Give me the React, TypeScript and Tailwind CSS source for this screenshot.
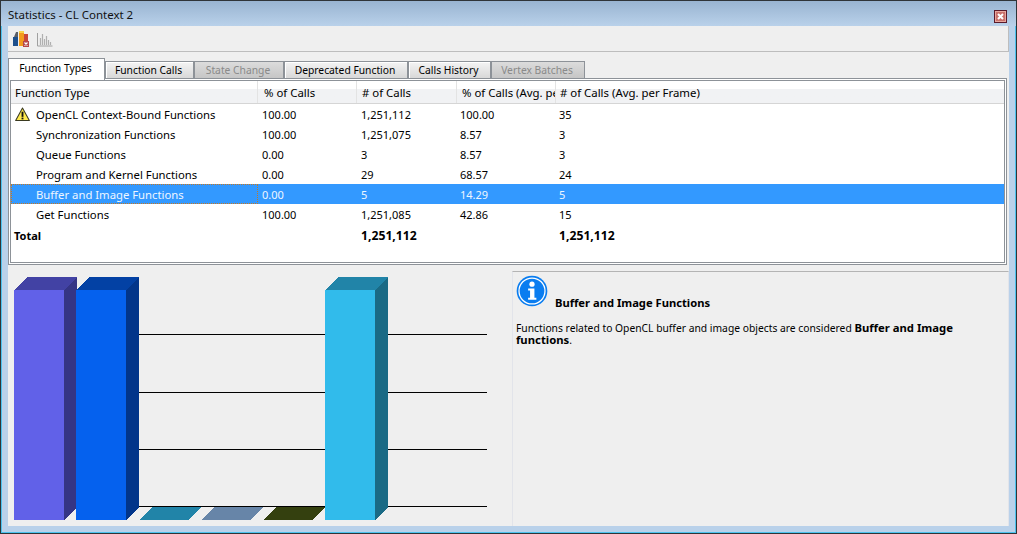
const font = "[font-family:'Noto_Sans',sans-serif]";

const tabs = [
  { t: "Function Types", w: "w-[97px]", k: "a" },
  { t: "Function Calls", w: "w-[89px]", k: "n" },
  { t: "State Change", w: "w-[90px]", k: "d" },
  { t: "Deprecated Function", w: "w-[124px]", k: "n" },
  { t: "Calls History", w: "w-[83px]", k: "n" },
  { t: "Vertex Batches", w: "w-[94px]", k: "d" },
];

const rows = [
  ["OpenCL Context-Bound Functions", "100.00", "1,251,112", "100.00", "35"],
  ["Synchronization Functions", "100.00", "1,251,075", "8.57", "3"],
  ["Queue Functions", "0.00", "3", "8.57", "3"],
  ["Program and Kernel Functions", "0.00", "29", "68.57", "24"],
  ["Buffer and Image Functions", "0.00", "5", "14.29", "5"],
  ["Get Functions", "100.00", "1,251,085", "42.86", "15"],
];

const headers = [
  { t: "Function Type", c: "pl-[4px]" },
  { t: "% of Calls", c: "pl-[6px]" },
  { t: "# of Calls", c: "pl-[5px]" },
  { t: "% of Calls (Avg. per Frame)", c: "pl-[5px]" },
  { t: "# of Calls (Avg. per Frame)", c: "pl-[4px]" },
];

function Warn() {
  return (
    <svg width="15" height="15" viewBox="0 0 16 16" className="absolute left-[4px] top-[3px]">
      <path d="M8 1 L15.3 14.5 H0.7 Z" fill="#ffe94d" stroke="#3a3a20" strokeWidth="1.1" strokeLinejoin="round" />
      <rect x="7" y="5" width="2" height="5.5" fill="#111" />
      <rect x="7" y="11.3" width="2" height="1.9" fill="#111" />
    </svg>
  );
}

function Info() {
  return (
    <svg width="32" height="32" viewBox="0 0 33 33" className="shrink-0">
      <circle cx="16.5" cy="16.5" r="15.8" fill="#0a7df0" />
      <circle cx="16.5" cy="16.5" r="13.4" fill="none" stroke="#fff" strokeWidth="1.3" />
      <circle cx="16.5" cy="9.5" r="2.7" fill="#fff" />
      <path d="M12.5 14 H19 V23.5 H21 V25.5 H12.5 V23.5 H14.5 V16 H12.5 Z" fill="#fff" />
    </svg>
  );
}

function Chart() {
  const tall = [
    { x: 14, f: "#6161e8", t: "#4242a4", s: "#353585" },
    { x: 76, f: "#0561ee", t: "#0341a4", s: "#02358a" },
    { x: 325, f: "#31bbeb", t: "#2184a8", s: "#1a6a85" },
  ];
  const flat = [
    { x: 139, c: "#2184a8" },
    { x: 201, c: "#6785a8" },
    { x: 263, c: "#34400f" },
  ];
  return (
    <svg width="504" height="261" viewBox="8 265 504 261" className="block" shapeRendering="crispEdges">
      {[334, 392, 449, 506].map((y) => (
        <rect key={y} x="139" y={y} width="348" height="1" fill="#000" />
      ))}
      {flat.map((b) => (
        <polygon key={b.x} points={`${b.x},520 ${b.x + 13},507 ${b.x + 62},507 ${b.x + 50},520`} fill={b.c} />
      ))}
      {tall.map((b) => (
        <g key={b.x}>
          <polygon points={`${b.x},290 ${b.x + 13},277 ${b.x + 63},277 ${b.x + 50},290`} fill={b.t} />
          <polygon points={`${b.x + 50},290 ${b.x + 63},277 ${b.x + 63},507 ${b.x + 50},520`} fill={b.s} />
          <rect x={b.x} y="290" width="50" height="230" fill={b.f} />
        </g>
      ))}
    </svg>
  );
}

function ToolIcons() {
  return (
    <div className="flex items-center gap-[8px] pl-[5px]">
      <svg width="16" height="16" viewBox="0 0 16 16">
        <path d="M1 6 L3 1 H5 V7 H1 Z" fill="#5a5f66" />
        <rect x="0" y="6" width="5" height="9" fill="#1d4f8c" />
        <rect x="6" y="2" width="5" height="13" fill="#f39a1c" />
        <rect x="6" y="0" width="5" height="2" fill="#f8d34a" />
        <rect x="11" y="3" width="4" height="8" fill="#c9453a" />
        <rect x="10" y="10" width="6" height="6" fill="#b5474a" />
        <path d="M11.5 11.5 L14.5 14.5 M14.5 11.5 L11.5 14.5" stroke="#fff" strokeWidth="1.2" />
      </svg>
      <svg width="16" height="16" viewBox="0 0 16 16">
        <path d="M0.5 2 V15 H15.5" stroke="#a0a0a0" fill="none" />
        <path d="M3.5 14 V7 M5.5 14 V3 M7.5 14 V8 M9.5 14 V5 M11.5 14 V9 M13.5 14 V11" stroke="#b0b0b0" strokeWidth="1.2" fill="none" />
      </svg>
    </div>
  );
}

export default function App() {
  return (
    <div className={`${font} w-[1017px] h-[534px] flex flex-col overflow-hidden border border-[#2f3438] bg-[#b9d1ea] text-[11px] text-black`}>
      <div className="h-[25px] shrink-0 flex items-center justify-between pl-[7px] pr-[9px] bg-gradient-to-b from-[#99b4d1] to-[#b9d1ea]">
        <span className="text-[11.5px] text-[#111] pt-[3px]">Statistics - CL Context 2</span>
        <div className="w-[13px] h-[13px] mt-[5px] bg-[#c9706a] border border-[#5a1a2a] shadow-[inset_0_0_0_1px_#e8a8a0] flex items-center justify-center">
          <svg width="9" height="9" viewBox="0 0 9 9">
            <path d="M2 2 L7 7 M7 2 L2 7" stroke="#fff" strokeWidth="2" />
          </svg>
        </div>
      </div>
      <div className="flex-1 min-h-0 flex flex-col border-x border-b border-[#4cc2ee]">
        <div className="ml-[6px] w-[1001px] flex-1 min-h-0 flex flex-col bg-[#efefef]">
          <div className="h-[26px] shrink-0 flex items-center border-b border-r border-[#bdbdbd]">
            <ToolIcons />
          </div>
          <div className="h-[6px] shrink-0" />
          <div className="h-[20px] shrink-0 flex items-start text-[10.3px] relative z-10">
            {tabs.map((tab) => (
              <div
                key={tab.t}
                className={
                  tab.k === "a"
                    ? `${tab.w} h-[22px] bg-white border border-b-0 border-[#8d9298] flex items-center justify-center pb-[1px] pr-[2px]`
                    : tab.k === "n"
                    ? `${tab.w} h-[17px] mt-[3px] bg-gradient-to-b from-[#f4f4f4] to-[#d8d8d8] border-x border-t border-[#8d9298] shadow-[inset_1px_1px_0_#ffffff] flex items-center justify-center pt-[1px] pr-[2px]`
                    : `${tab.w} h-[17px] mt-[3px] bg-gradient-to-b from-[#dcdcdc] to-[#c6c6c6] border-x border-t border-[#8d9298] text-[#8a8a8a] flex items-center justify-center pt-[1px] pr-[2px]`
                }
              >
                {tab.t}
              </div>
            ))}
          </div>
          <div className="w-[999px] h-[187px] shrink-0 border border-[#8d9298] p-[1px] bg-white">
            <div className="h-full border border-[#8d9298]">
              <div className="h-[23px] grid grid-cols-[247px_99px_100px_99px_1fr] border-b border-[#d5d5d5] bg-gradient-to-b from-white from-35% to-[#f1f2f4] to-35% text-[11.4px]">
                {headers.map((h) => (
                  <div key={h.t} className={`${h.c} pt-[1px] flex items-center border-r border-[#e3e3e3] overflow-hidden whitespace-nowrap last:border-r-0`}>
                    {h.t}
                  </div>
                ))}
              </div>
              {rows.map((r, i) => {
                const sel = i === 4;
                return (
                  <div key={r[0]} className={`h-[20px] grid grid-cols-[247px_99px_99px_99px_1fr] items-center ${sel ? "bg-[#3399ff] text-[#eef6ff]" : ""}`}>
                    <div className={`relative h-full flex items-center pl-[25px] pt-[2px] text-[11.3px] ${sel ? "outline-1 outline-dotted -outline-offset-1 outline-[#c87820]" : ""}`}>
                      {i === 0 && <Warn />}
                      {r[0]}
                    </div>
                    {r.slice(1).map((c, j) => (
                      <div key={j} className="pl-[4px] pt-[2px]">{c}</div>
                    ))}
                  </div>
                );
              })}
              <div className="h-[20px] grid grid-cols-[247px_99px_99px_99px_1fr] items-center font-bold pt-[3px]">
                <div className="pl-[3px]">Total</div>
                <div />
                <div className="pl-[4px] text-[12.2px]">1,251,112</div>
                <div />
                <div className="pl-[4px] text-[12.2px]">1,251,112</div>
              </div>
            </div>
          </div>
          <div className="flex-1 min-h-0 flex">
            <div className="w-[504px] shrink-0">
              <Chart />
            </div>
            <div className="flex-1 mt-[6px] border-t border-x border-t-[#b4b4b4] border-x-[#e2e4ea]">
              <div className="flex items-start pl-[3px] pt-[3px]">
                <Info />
                <span className="font-bold text-[11.2px] ml-[7px] mt-[20px]">Buffer and Image Functions</span>
              </div>
              <p className="pl-[3px] mt-[10px] w-[470px] leading-[12px] text-[10.3px]">
                Functions related to OpenCL buffer and image objects are considered <b className="text-[11.3px]">Buffer and Image functions</b>.
              </p>
            </div>
          </div>
        </div>
        <div className="h-[6px] shrink-0" />
      </div>
    </div>
  );
}
